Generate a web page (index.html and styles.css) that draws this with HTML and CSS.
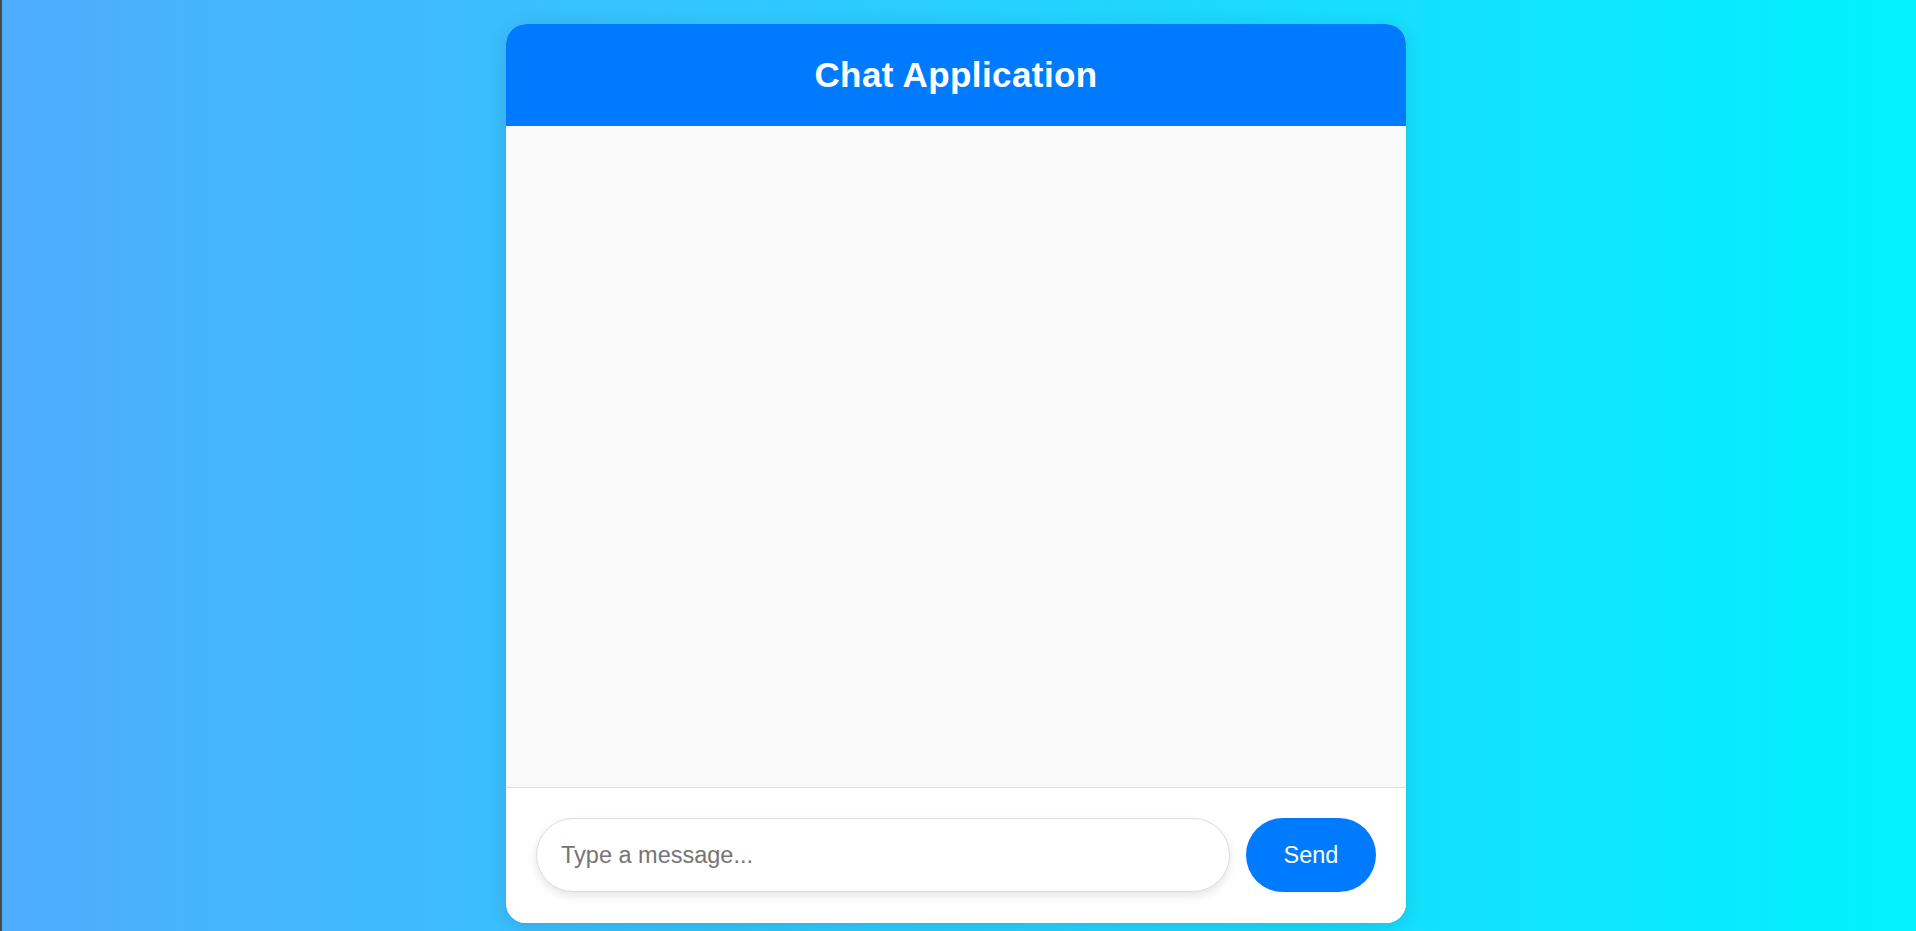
FILE: index.html
```html
<!DOCTYPE html>
<html lang="en">
<head>
<meta charset="utf-8">
<title>Chat Application</title>
<link rel="stylesheet" href="styles.css">
</head>
<body>
<div class="chat">
  <header class="chat-header">
    <h1 class="chat-title">Chat Application</h1>
  </header>
  <main class="chat-messages"></main>
  <footer class="chat-input">
    <input class="message-field" type="text" placeholder="Type a message...">
    <button class="send-button" type="button">Send</button>
  </footer>
</div>
</body>
</html>
```

FILE: styles.css
```css
* { box-sizing: border-box; }

html, body { height: 100%; }

body {
  margin: 0;
  border-left: 2px solid #4a4a4a;
  background: linear-gradient(to right, #4facfe 0%, #00f2fe 100%);
  font-family: "Liberation Sans", Arial, sans-serif;
  display: flex;
  justify-content: center;
  align-items: flex-start;
  overflow: hidden;
}

.chat {
  width: 900px;
  height: 899px;
  margin-top: 24px;
  margin-right: 6px;
  background: #fff;
  border-radius: 20px;
  overflow: hidden;
  display: flex;
  flex-direction: column;
  box-shadow: 0 4px 20px rgba(0, 0, 0, 0.12);
}

.chat-header {
  height: 102px;
  flex: none;
  background: #007bff;
  display: flex;
  align-items: center;
  justify-content: center;
}

.chat-title {
  margin: 0;
  color: #fff;
  font-size: 35px;
  font-weight: bold;
  letter-spacing: 0.4px;
}

.chat-messages {
  flex: 1;
  background: #f9f9f9;
  border-bottom: 1px solid #dddddd;
}

.chat-input {
  flex: none;
  display: flex;
  align-items: center;
  gap: 16px;
  padding: 30px 30px 31px;
  background: #fff;
}

.message-field {
  flex: 1;
  height: 74px;
  padding: 0 24px;
  border: 1px solid #dddddd;
  border-radius: 37px;
  font-family: "Liberation Sans", Arial, sans-serif;
  font-size: 23.5px;
  color: #333;
  background: #fff;
  outline: none;
  box-shadow: 0 4px 10px rgba(0, 0, 0, 0.1);
}

.message-field::placeholder {
  color: #757575;
}

.send-button {
  width: 130px;
  height: 74px;
  border: none;
  border-radius: 37px;
  background: #007bff;
  color: #fff;
  font-family: "Liberation Sans", Arial, sans-serif;
  font-size: 23.5px;
  cursor: pointer;
}
```
